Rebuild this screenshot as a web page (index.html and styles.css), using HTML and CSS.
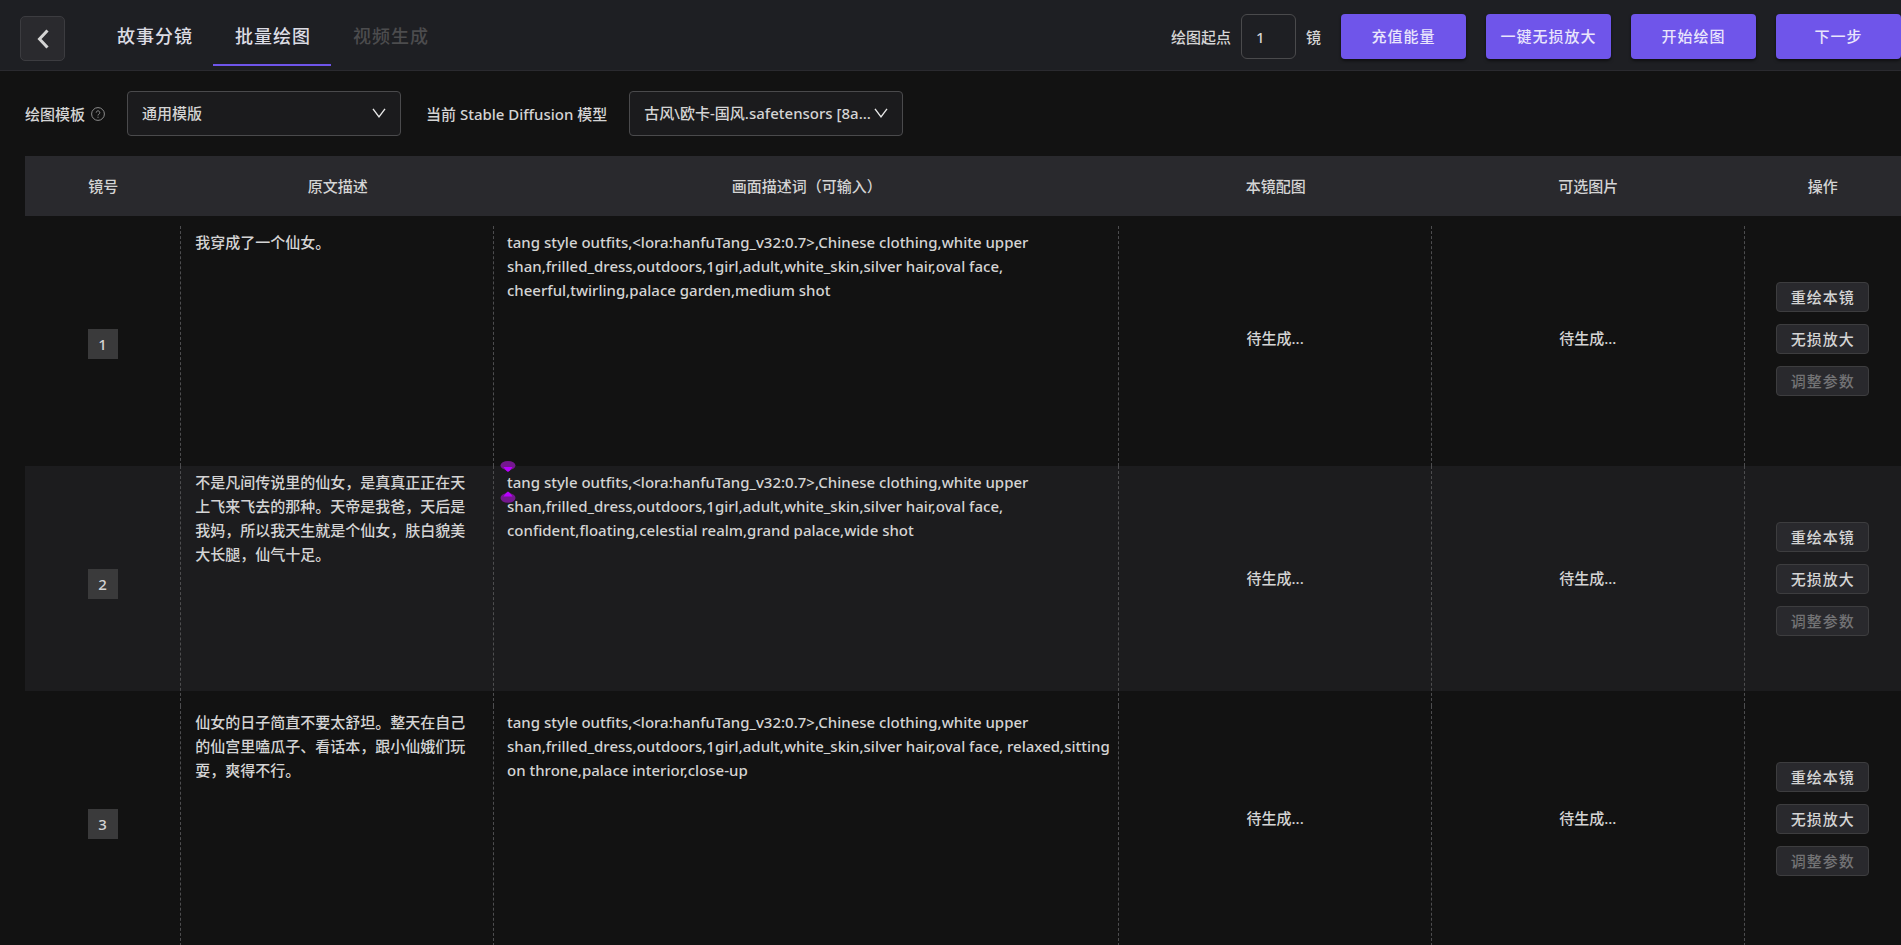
FILE: index.html
```html
<!DOCTYPE html>
<html lang="zh-CN">
<head>
<meta charset="utf-8">
<title>批量绘图</title>
<link rel="stylesheet" href="styles.css">
</head>
<body>
<header class="topbar">
  <button class="back" type="button" aria-label="返回">
    <svg width="12" height="20" viewBox="0 0 12 20" fill="none" stroke="currentColor" stroke-width="3"><path d="M10.500 1.500 2.500 10l8 8.500"/></svg>
  </button>
  <nav class="tabs">
    <a class="tab" href="#story">故事分镜</a>
    <a class="tab tab-active" href="#draw">批量绘图</a>
    <a class="tab tab-disabled" aria-disabled="true">视频生成</a>
  </nav>
  <div class="actions">
    <div class="start">
      <label for="start">绘图起点</label>
      <input id="start" class="start-input" type="text" value="1">
      <span>镜</span>
    </div>
    <button class="primary" type="button">充值能量</button>
    <button class="primary" type="button">一键无损放大</button>
    <button class="primary" type="button">开始绘图</button>
    <button class="primary" type="button">下一步</button>
  </div>
</header>
<main class="content">
  <div class="filters">
    <label class="filter-label" for="template">绘图模板
      <svg class="help" width="14" height="14" viewBox="0 0 14 14" fill="none" stroke="currentColor"><circle cx="7" cy="7" r="6.400"/><path d="M5.200 5.600a1.800 1.800 0 1 1 2.700 1.600c-.6.300-.9.600-.9 1.300M7 9.700v1.100"/></svg>
    </label>
    <div class="select-box">
      <select id="template" class="select"><option>通用模版</option></select>
      <svg class="chevron" width="14" height="10" viewBox="0 0 14 10" fill="none" stroke="currentColor" stroke-width="1.400"><path d="M1 .8 7 8.800l6-8"/></svg>
    </div>
    <label class="filter-label" for="model">当前 Stable Diffusion 模型</label>
    <div class="select-box">
      <select id="model" class="select"><option>古风\欧卡-国风.safetensors [8a...</option></select>
      <svg class="chevron" width="14" height="10" viewBox="0 0 14 10" fill="none" stroke="currentColor" stroke-width="1.400"><path d="M1 .8 7 8.800l6-8"/></svg>
    </div>
  </div>
  <table class="shots">
    <colgroup><col class="c1"><col class="c2"><col class="c4"><col class="c2"><col class="c2"><col class="c1"></colgroup>
    <thead>
      <tr><th>镜号</th><th>原文描述</th><th>画面描述词（可输入）</th><th>本镜配图</th><th>可选图片</th><th>操作</th></tr>
    </thead>
    <tbody>
      <tr class="spacer"><td colspan="6"></td></tr>
      <tr class="shot">
        <td><div class="cell cell-num"><span class="num">1</span></div></td>
        <td><p class="source">我穿成了一个仙女。</p></td>
        <td><div class="prompt-box"><textarea class="prompt" aria-label="画面描述词 1" spellcheck="false">tang style outfits,&lt;lora:hanfuTang_v32:0.7&gt;,Chinese clothing,white upper shan,frilled_dress,outdoors,1girl,adult,white_skin,silver hair,oval face, cheerful,twirling,palace garden,medium shot</textarea></div></td>
        <td><div class="cell">待生成...</div></td>
        <td><div class="cell">待生成...</div></td>
        <td><div class="cell ops"><button class="op" type="button">重绘本镜</button><button class="op" type="button">无损放大</button><button class="op" type="button" disabled>调整参数</button></div></td>
      </tr>
      <tr class="shot shot-alt">
        <td><div class="cell cell-num"><span class="num">2</span></div></td>
        <td><p class="source">不是凡间传说里的仙女，是真真正正在天上飞来飞去的那种。天帝是我爸，天后是我妈，所以我天生就是个仙女，肤白貌美大长腿，仙气十足。</p></td>
        <td><div class="prompt-box"><textarea class="prompt" aria-label="画面描述词 2" spellcheck="false">tang style outfits,&lt;lora:hanfuTang_v32:0.7&gt;,Chinese clothing,white upper shan,frilled_dress,outdoors,1girl,adult,white_skin,silver hair,oval face, confident,floating,celestial realm,grand palace,wide shot</textarea>
          <svg class="handles" width="16" height="42" viewBox="0 0 16 42"><ellipse cx="8" cy="4.500" rx="7.500" ry="4.500" fill="#74178f"/><path d="M3.500 6h9L10 9.500 8 11 6 9.500z" fill="#b800ff"/><ellipse cx="8" cy="37" rx="7.500" ry="4.800" fill="#74178f"/><path d="M3.500 35.500h9L10 32 8 30.500 6 32z" fill="#b800ff"/></svg></div></td>
        <td><div class="cell">待生成...</div></td>
        <td><div class="cell">待生成...</div></td>
        <td><div class="cell ops"><button class="op" type="button">重绘本镜</button><button class="op" type="button">无损放大</button><button class="op" type="button" disabled>调整参数</button></div></td>
      </tr>
      <tr class="shot">
        <td><div class="cell cell-num"><span class="num">3</span></div></td>
        <td><p class="source">仙女的日子简直不要太舒坦。整天在自己的仙宫里嗑瓜子、看话本，跟小仙娥们玩耍，爽得不行。</p></td>
        <td><div class="prompt-box"><textarea class="prompt" aria-label="画面描述词 3" spellcheck="false">tang style outfits,&lt;lora:hanfuTang_v32:0.7&gt;,Chinese clothing,white upper shan,frilled_dress,outdoors,1girl,adult,white_skin,silver hair,oval face, relaxed,sitting on throne,palace interior,close-up</textarea></div></td>
        <td><div class="cell">待生成...</div></td>
        <td><div class="cell">待生成...</div></td>
        <td><div class="cell ops"><button class="op" type="button">重绘本镜</button><button class="op" type="button">无损放大</button><button class="op" type="button" disabled>调整参数</button></div></td>
      </tr>
    </tbody>
  </table>
</main>
</body>
</html>
```

FILE: styles.css
```css
* { box-sizing: border-box; }
html { overflow: hidden; }
body {
  margin: 0;
  background: #121212;
  color: #d4d4d4;
  font-family: "Noto Sans", "Noto Sans CJK SC", sans-serif;
  font-size: 15px;
  font-weight: 500;
  line-height: 24px;
}
button, input, select, textarea { font: inherit; color: inherit; margin: 0; }

.topbar {
  display: flex;
  align-items: flex-start;
  height: 71px;
  padding-left: 20px;
  background: #1e1f23;
  border-bottom: 1px solid #2a2a2f;
}
.back {
  display: flex;
  align-items: center;
  justify-content: center;
  width: 45px;
  height: 45px;
  margin-top: 16px;
  padding: 0;
  background: #2a2a2e;
  border: 1px solid #3c3c40;
  border-radius: 5px;
}
.tabs { display: flex; margin-left: 30px; }
.tab {
  height: 66px;
  padding: 24px 20px 0 22px;
  color: #dcdce4;
  font-size: 18px;
  letter-spacing: 1px;
  text-decoration: none;
  border-bottom: 2px solid transparent;
}
.tab-active { border-color: #6f55ea; }
.tab-disabled { color: #4c4c4e; }
.actions { display: flex; gap: 20px; margin: 14px 0 0 auto; }
.start { display: flex; align-items: center; gap: 10px; }
.start-input {
  width: 55px;
  height: 45px;
  padding: 0 14px;
  background: transparent;
  border: 1px solid #4a4a4c;
  border-radius: 6px;
}
.primary {
  width: 125px;
  height: 45px;
  padding: 0 0 2px;
  background: #6f55ea;
  color: #e9e5fc;
  letter-spacing: 1px;
  border: 0;
  border-radius: 4px;
  box-shadow: 0 2px 3px rgba(0, 0, 0, 0.5);
}

.content { padding-left: 25px; }
.filters { display: flex; align-items: center; padding: 20px 0; }
.filter-label { display: flex; align-items: center; gap: 6px; }
.help { color: #8c8c8c; }
.select-box { position: relative; width: 274px; margin: 0 25px 0 22px; }
.select {
  display: block;
  width: 100%;
  height: 45px;
  padding: 0 14px 2px;
  appearance: none;
  background: #1b1b1d;
  border: 1px solid #4a4a4c;
  border-radius: 4px;
}
.chevron {
  position: absolute;
  top: 17px;
  right: 15px;
  color: #e8e8e8;
  pointer-events: none;
}

.shots { width: 100%; table-layout: fixed; border-collapse: separate; border-spacing: 0; }
.c1 { width: 8.333%; }
.c2 { width: 16.667%; }
.c4 { width: 33.333%; }
.shots th { height: 60px; padding: 0; background: #29292d; font-weight: 500; }
.shots td { padding: 0; vertical-align: top; }
.spacer td { height: 10px; }
.shot td { padding-bottom: 15px; border-right: 1px dashed #4d4d4f; }
.shot td:last-child { border-right: 0; }
.shot-alt td { background: linear-gradient(#1c1c1e, #1c1c1e) repeat-x 0 0 / 100% 225px; }
.cell { display: flex; align-items: center; justify-content: center; height: 225px; padding-bottom: 2px; }
.cell-num { padding: 10px 0 0; }
.num { width: 30px; height: 30px; line-height: 30px; text-align: center; background: #3a3a3b; }
.source { margin: 0; padding: 4px 14px; }
.prompt-box { position: relative; }
.prompt {
  display: block;
  width: 100%;
  height: 225px;
  padding: 4px 4px 4px 13px;
  background: transparent;
  border: 0;
  outline: 0;
  resize: none;
  overflow: hidden;
}
.handles { position: absolute; top: -5px; left: 6px; }
.ops { flex-direction: column; gap: 12px; padding: 0; }
.op {
  width: 93px;
  height: 30px;
  padding: 0;
  line-height: 20px;
  letter-spacing: 1px;
  background: #29292d;
  border: 1px solid #3d3d3f;
  border-radius: 4px;
}
.op:disabled { color: #737375; }
```
